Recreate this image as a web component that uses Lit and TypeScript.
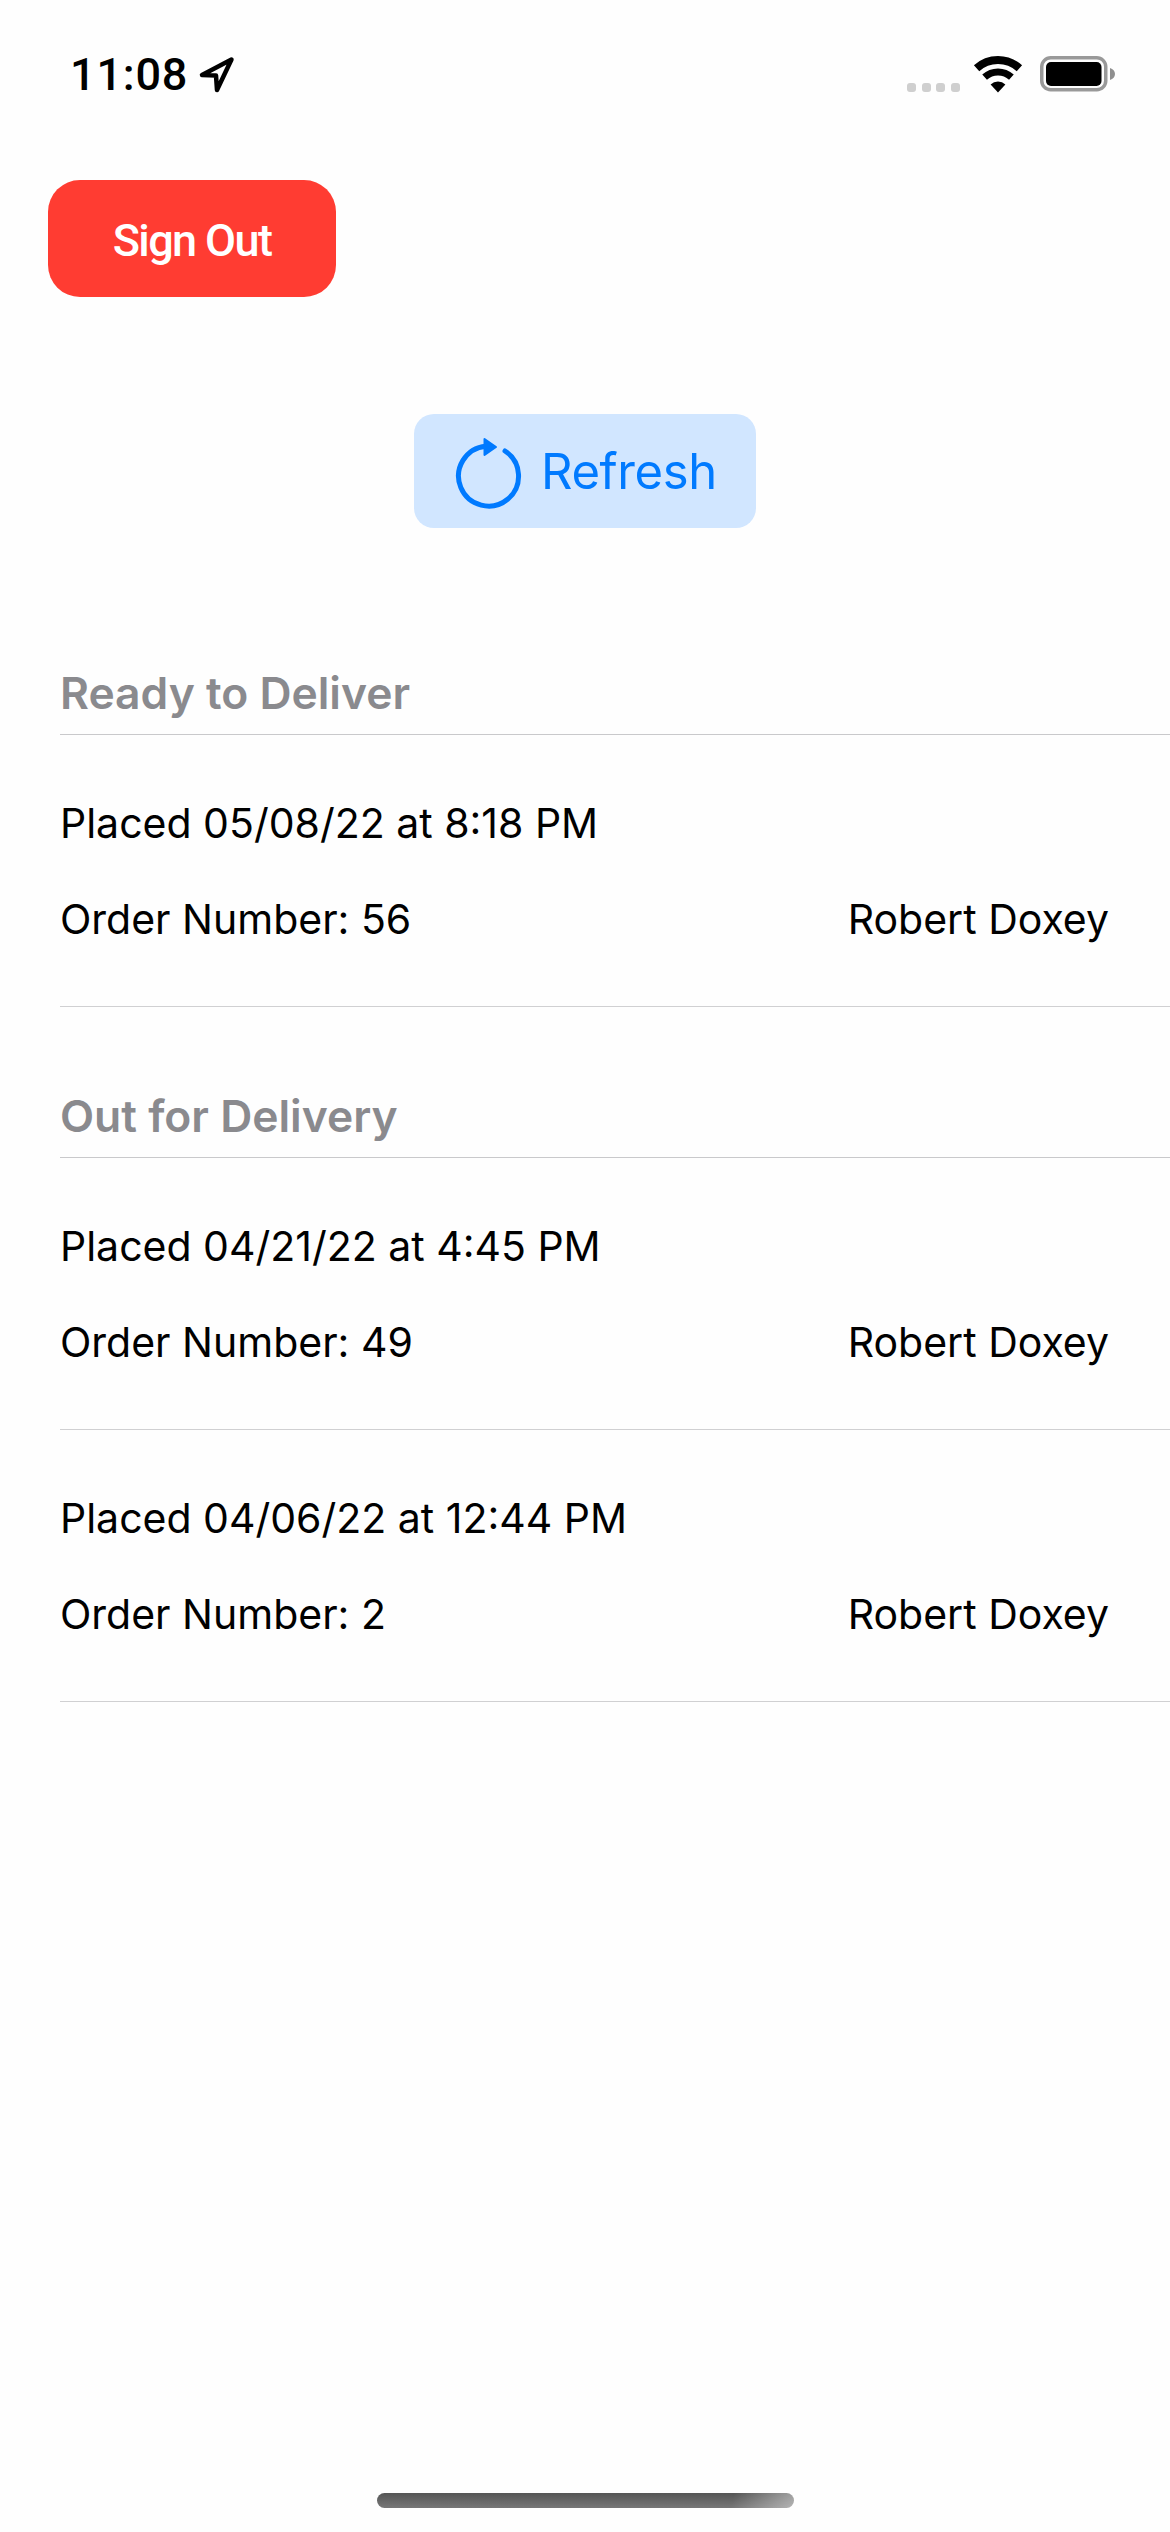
import { LitElement, css, html } from "lit";
import { customElement } from "lit/decorators.js";

type Order = { placed: string; number: number; name: string };

const sections: { title: string; orders: Order[] }[] = [
  {
    title: "Ready to Deliver",
    orders: [{ placed: "05/08/22 at 8:18 PM", number: 56, name: "Robert Doxey" }],
  },
  {
    title: "Out for Delivery",
    orders: [
      { placed: "04/21/22 at 4:45 PM", number: 49, name: "Robert Doxey" },
      { placed: "04/06/22 at 12:44 PM", number: 2, name: "Robert Doxey" },
    ],
  },
];

@customElement("app-root")
export class AppRoot extends LitElement {
  static styles = css`
    :host {
      display: block;
      position: relative;
      width: 1170px;
      height: 2532px;
      overflow: hidden;
      background: #fefefe;
      font-family: Inter, "Noto Sans", sans-serif;
      color: #000;
    }

    .status {
      display: flex;
      align-items: center;
      justify-content: space-between;
      height: 148px;
      padding: 0 55px 0 70px;
    }

    .clock {
      display: flex;
      align-items: center;
      gap: 11px;
      font-family: Roboto, sans-serif;
      font-size: 45px;
      font-weight: 500;
      letter-spacing: 0.8px;
    }

    .indicators {
      display: flex;
      align-items: center;
    }

    .dots {
      display: flex;
      gap: 5.5px;
      align-self: flex-end;
      margin: 0 14.5px 1px 0;
    }

    .dots span {
      width: 9px;
      height: 9px;
      border-radius: 3px;
      background: #cfcfcf;
    }

    .battery {
      margin-left: 18px;
    }

    svg {
      display: block;
      overflow: visible;
    }

    button {
      display: flex;
      align-items: center;
      border: none;
      padding: 0;
    }

    .sign-out {
      justify-content: center;
      width: 288px;
      height: 117px;
      margin: 32px 0 0 48px;
      padding-top: 3px;
      border-radius: 32px;
      background: #ff3c32;
      color: #fff;
      font-family: Roboto, sans-serif;
      font-size: 45px;
      font-weight: 500;
      letter-spacing: -1.6px;
    }

    .refresh {
      gap: 16px;
      width: 342px;
      height: 114px;
      margin: 117px 0 0 414px;
      padding-left: 39px;
      border-radius: 20px;
      background: #d1e6ff;
      color: #007aff;
      font-family: inherit;
      font-size: 49px;
      letter-spacing: -0.4px;
    }

    .list {
      margin-top: 137px;
    }

    .section + .section {
      margin-top: 80.5px;
    }

    .section-title {
      margin-left: 60px;
      padding-bottom: 13px;
      border-bottom: 1.5px solid #c9c9cb;
      color: #8a8a8e;
      font-size: 44.4px;
      font-weight: 600;
      line-height: 56px;
    }

    .order {
      display: grid;
      gap: 40px;
      margin-left: 60px;
      padding: 60px 61px 59px 0;
      border-bottom: 1.5px solid #d0d0d2;
      font-size: 41px;
      line-height: 56px;
    }

    .order-line {
      display: flex;
      justify-content: space-between;
    }

    .home {
      position: absolute;
      left: 377px;
      top: 2493px;
      width: 417px;
      height: 15px;
      border-radius: 8px;
      background: linear-gradient(100deg, transparent 85%, rgba(255, 255, 255, 0.45) 100%),
        linear-gradient(180deg, #555555, #777777);
    }
  `;

  private renderOrder(order: Order) {
    return html`
      <div class="order">
        <div>Placed ${order.placed}</div>
        <div class="order-line">
          <span>Order Number: ${order.number}</span>
          <span>${order.name}</span>
        </div>
      </div>
    `;
  }

  render() {
    return html`
      <div class="status">
        <div class="clock">
          <span>11:08</span>
          <svg width="35" height="35" viewBox="0 0 35 35" fill="none" stroke="#000" stroke-width="4.5" stroke-linejoin="round">
            <path d="M32.5 2.5 L3 18 L17 18.5 L18 33 Z" />
          </svg>
        </div>
        <div class="indicators">
          <div class="dots"><span></span><span></span><span></span><span></span></div>
          <svg width="48" height="37" viewBox="0 0 48 37" fill="none" stroke="#000">
            <path stroke-width="8" d="M2.6 12.2 A32 32 0 0 1 45.4 12.2" />
            <path stroke-width="7" d="M10.6 21.1 A20 20 0 0 1 37.4 21.1" />
            <path stroke="none" fill="#000" d="M24 36.5 L16.6 28.6 A10.6 10.6 0 0 1 31.4 28.6 Z" />
          </svg>
          <svg class="battery" width="75" height="36" viewBox="0 0 75 36">
            <rect x="1.75" y="1.75" width="64" height="32" rx="9" fill="none" stroke="#999" stroke-width="3.5" />
            <rect x="6" y="6" width="55.5" height="24" rx="5" fill="#000" />
            <path d="M70 12 C73 13 75 15 75 18 C75 21 73 23 70 24 Z" fill="#8f8f8f" />
          </svg>
        </div>
      </div>

      <button class="sign-out">Sign Out</button>

      <button class="refresh">
        <svg width="72" height="72" viewBox="0 0 72 72" fill="none" stroke="#007aff">
          <path stroke-width="5" stroke-linecap="round" d="M52 16 A30 30 0 1 1 33 11.2" />
          <path fill="#007aff" stroke-width="2" stroke-linejoin="round" d="M31.5 4 L43 12 L31.5 20 Z" />
        </svg>
        <span>Refresh</span>
      </button>

      <div class="list">
        ${sections.map(
          (section) => html`
            <div class="section">
              <div class="section-title">${section.title}</div>
              ${section.orders.map((order) => this.renderOrder(order))}
            </div>
          `
        )}
      </div>

      <div class="home"></div>
    `;
  }
}
